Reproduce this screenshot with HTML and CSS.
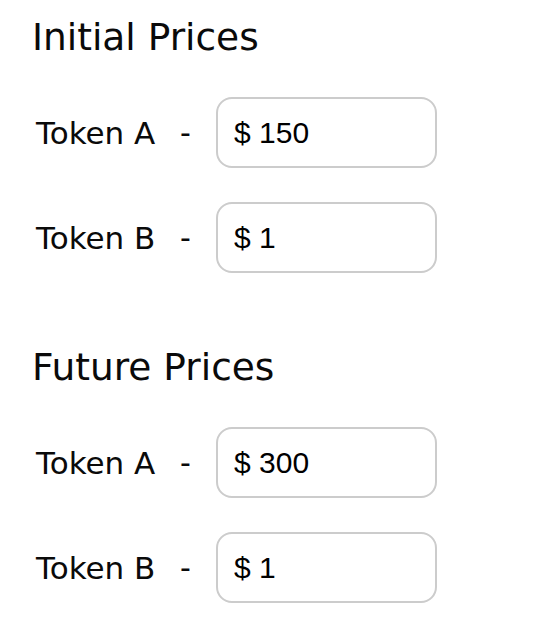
FILE: index.html
```html
<!DOCTYPE html>
<html lang="en">
<head>
<meta charset="utf-8">
<title>Prices</title>
<link rel="stylesheet" href="styles.css">
</head>
<body>
<main class="page">
  <section class="group">
    <h2 class="group-title">Initial Prices</h2>
    <div class="rows">
      <label class="row">
        <span class="token">Token A</span>
        <span class="dash">-</span>
        <input class="price" type="text" value="$ 150">
      </label>
      <label class="row">
        <span class="token">Token B</span>
        <span class="dash">-</span>
        <input class="price" type="text" value="$ 1">
      </label>
    </div>
  </section>
  <section class="group group-future">
    <h2 class="group-title">Future Prices</h2>
    <div class="rows">
      <label class="row">
        <span class="token">Token A</span>
        <span class="dash">-</span>
        <input class="price" type="text" value="$ 300">
      </label>
      <label class="row">
        <span class="token">Token B</span>
        <span class="dash">-</span>
        <input class="price" type="text" value="$ 1">
      </label>
    </div>
  </section>
</main>
</body>
</html>
```

FILE: styles.css
```css
html, body {
  margin: 0;
  padding: 0;
  background: #ffffff;
}

.page {
  padding: 15px 0 0 32px;
  font-family: "DejaVu Sans", "Liberation Sans", sans-serif;
  color: #0a0a0a;
}

.group-title {
  margin: 0 0 38px 0;
  font-size: 37.5px;
  line-height: 44px;
  font-weight: 400;
}

.group-future {
  margin-top: 72px;
}

.rows {
  display: flex;
  flex-direction: column;
  gap: 34px;
}

.row {
  display: grid;
  grid-template-columns: 148px 36px 221px;
  align-items: center;
  height: 71px;
}

.token {
  padding-left: 4px;
  font-size: 31px;
  line-height: 36px;
}

.dash {
  font-size: 30px;
  line-height: 36px;
}

.price {
  box-sizing: border-box;
  width: 221px;
  height: 71px;
  margin: 0;
  padding: 0 16px;
  border: 2px solid #cccccc;
  border-radius: 16px;
  background: #ffffff;
  color: #000000;
  font-family: "Liberation Sans", Arial, sans-serif;
  font-size: 30px;
  outline: none;
}
```
